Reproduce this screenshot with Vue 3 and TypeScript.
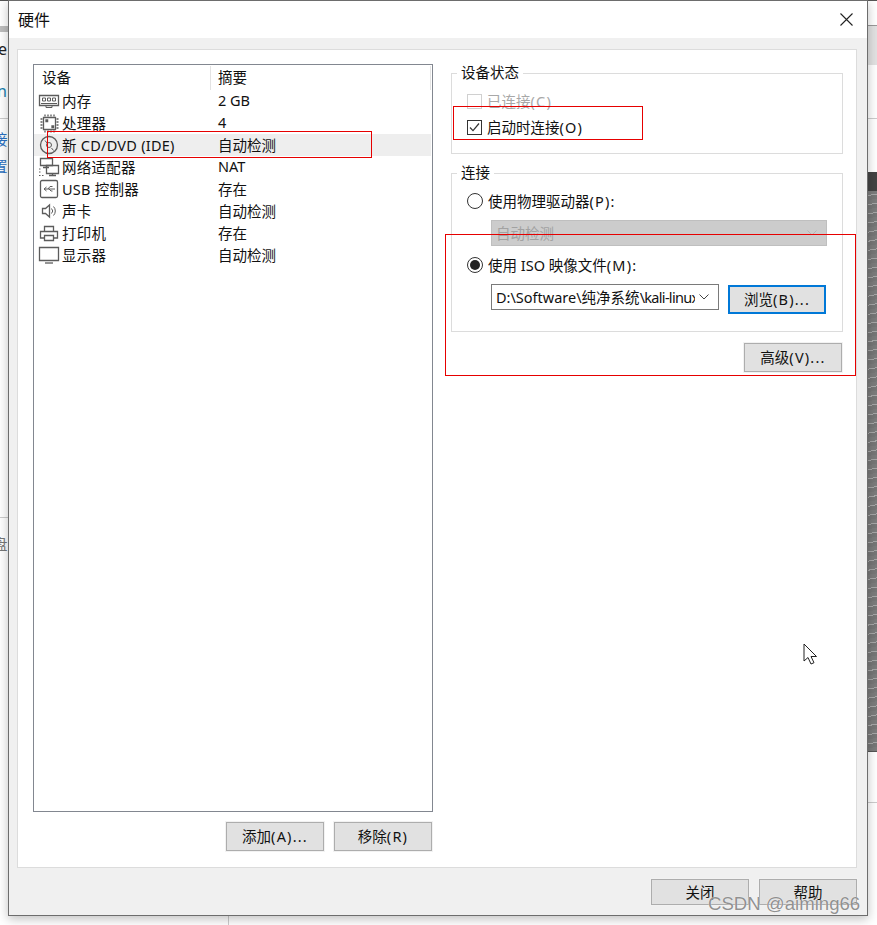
<script setup lang="ts">
import { h } from 'vue'

interface Shape { d: string; fill?: boolean; thin?: boolean }
interface Device { name: string; summary: string; selected?: boolean; icon: Shape[] }

// The reference's UI font sets "(X)" mnemonics and ellipses wider than the CJK around them.
const T = (props: { t: string }) =>
  props.t
    .split(/(\([A-Z]\)[:.]*)/)
    .filter(Boolean)
    .map((s) => (/^\([A-Z]\)/.test(s) ? h('span', { class: 'mn' }, s) : s))
T.props = ['t']

const devices: Device[] = [
  { name: '内存', summary: '2 GB', icon: [
    { d: 'M1.5 5.5h19v10h-19z' },
    { d: 'M4.500 8h3v3h-3zM9.500 8h3v3h-3zM14.500 8h3v3h-3z', thin: true },
    { d: 'M3 13.500h16M8 15.500v2h6v-2', thin: true },
  ] },
  { name: '处理器', summary: '4', icon: [
    { d: 'M5.500 5.500h12v12h-12z' },
    { d: 'M8 8h1.600v1.600H8zM14 14h1.600v1.600H14z', fill: true },
    { d: 'M7 2.500v2M10 2.500v2M13 2.500v2M16 2.500v2M7 18.500v2M10 18.500v2M13 18.500v2M16 18.500v2M2.500 7h2M2.500 10h2M2.500 13h2M2.500 16h2M18.500 7h2M18.500 10h2M18.500 13h2M18.500 16h2' },
  ] },
  { name: '新 CD/DVD (IDE)', summary: '自动检测', selected: true, icon: [
    { d: 'M11 2.500a8.500 8.500 0 1 0 0 17a8.500 8.500 0 1 0 0-17z' },
    { d: 'M11 8.500a2.500 2.500 0 1 0 0 5a2.500 2.500 0 1 0 0-5zM7 6.500L9 9M13.500 14l2 2.500', thin: true },
  ] },
  { name: '网络适配器', summary: 'NAT', icon: [
    { d: 'M2.500 2.500h12v7h-12zM8.500 9.500v2M5 11.500h6' },
    { d: 'M8.500 9.500h12v8h-12zM14.500 17.500v2M11 19.500h7' },
    { d: 'M1 19.500h1.500M4 19.500h1.500M1 16h1.500M1 13h1.500', thin: true },
  ] },
  { name: 'USB 控制器', summary: '存在', icon: [
    { d: 'M4 2.500h14a1.500 1.500 0 0 1 1.500 1.500v14a1.500 1.500 0 0 1-1.500 1.500H4a1.500 1.500 0 0 1-1.500-1.500V4A1.500 1.500 0 0 1 4 2.500z' },
    { d: 'M6 11h11M6 11l2.500-2M6 11l2.500 2M10 11l2-2.500h2.500M11 11l2 2h1.500', thin: true },
  ] },
  { name: '声卡', summary: '自动检测', icon: [
    { d: 'M4.500 8.500h3l4-3.500v12l-4-3.500h-3z' },
    { d: 'M13.500 8.500a3.500 3.500 0 0 1 0 5M15.500 6.500a6.500 6.500 0 0 1 0 9', thin: true },
  ] },
  { name: '打印机', summary: '存在', icon: [
    { d: 'M6.500 9V4.500h9V9' },
    { d: 'M6 16H2.500V9.500h17V16H16' },
    { d: 'M6.500 13.500h9v5h-9z' },
  ] },
  { name: '显示器', summary: '自动检测', icon: [
    { d: 'M1.500 3.500h19v13h-19z' },
    { d: 'M7 19h8' },
  ] },
]
</script>

<template>
  <div class="desktop">
    <div class="behind">
      <span class="strip-top"></span>
      <span class="strip-bar"></span>
      <span class="strip-e">e</span>
      <span class="strip-n">n</span>
      <span class="strip-rule r1"></span>
      <span class="strip-rule r2"></span>
      <span class="strip-a">接</span>
      <span class="strip-b">置</span>
      <span class="strip-c">盘</span>
      <span class="right-band"></span>
      <span class="right-rule r3"></span>
      <span class="right-dark"></span>
      <span class="right-noise"></span>
      <span class="right-rule r4"></span>
      <span class="bottom-rule"></span>
    </div>

    <section class="dialog">
      <header class="titlebar">
        <span class="title">硬件</span>
        <svg class="close" viewBox="0 0 13 13" width="13" height="13">
          <path d="M.5.5l12 12M12.500.5l-12 12" fill="none" stroke="#222" stroke-width="1.100" />
        </svg>
      </header>

      <div class="body">
        <main class="panel">
          <div class="left">
            <div class="list">
              <div class="list-head">
                <span class="col-a">设备</span>
                <span class="col-b">摘要</span>
              </div>
              <div
                v-for="d in devices"
                :key="d.name"
                class="row"
                :class="{ selected: d.selected }"
              >
                <svg class="icon" viewBox="0 0 22 22" width="22" height="22">
                  <path
                    v-for="(s, i) in d.icon"
                    :key="i"
                    :d="s.d"
                    :fill="s.fill ? '#555' : 'none'"
                    stroke="#5c5c5c"
                    :stroke-width="s.thin ? 1 : 1.300"
                  />
                </svg>
                <span class="name">{{ d.name }}</span>
                <span class="summary">{{ d.summary }}</span>
              </div>
            </div>
            <div class="list-actions">
              <button class="btn"><span class="lbl"><T t="添加(A)..." /></span></button>
              <button class="btn"><span class="lbl"><T t="移除(R)" /></span></button>
            </div>
          </div>

          <div class="right">
            <div class="group status">
              <span class="legend">设备状态</span>
              <label class="opt disabled">
                <span class="check"></span><span class="lbl"><T t="已连接(C)" /></span>
              </label>
              <label class="opt">
                <span class="check on">
                  <svg viewBox="0 0 15 15" width="15" height="15">
                    <path d="M3 7.500l3 3.200L12 3.500" fill="none" stroke="#333" stroke-width="1.200" />
                  </svg>
                </span><span class="lbl"><T t="启动时连接(O)" /></span>
              </label>
            </div>

            <div class="group conn">
              <span class="legend">连接</span>
              <label class="opt"><span class="radio"></span><span class="lbl"><T t="使用物理驱动器(P):" /></span></label>
              <div class="select off">
                <span class="lbl">自动检测</span>
                <svg viewBox="0 0 10 6" width="10" height="6"><path d="M.5.5L5 5 9.500.5" fill="none" stroke="#b5b5b5" /></svg>
              </div>
              <label class="opt"><span class="radio on"></span><span class="lbl"><T t="使用 ISO 映像文件(M):" /></span></label>
              <div class="iso">
                <div class="select path">
                  <span class="path-text lbl">D:\Software\纯净系统<span class="tight">\kali-linux-2022.1-installer-amd64.iso</span></span>
                  <svg viewBox="0 0 10 6" width="10" height="6"><path d="M.5.5L5 5 9.500.5" fill="none" stroke="#444" /></svg>
                </div>
                <button class="btn focus"><span class="lbl"><T t="浏览(B)..." /></span></button>
              </div>
            </div>

            <div class="adv">
              <button class="btn"><span class="lbl"><T t="高级(V)..." /></span></button>
            </div>
          </div>
        </main>

        <footer class="footer">
          <button class="btn low"><span class="lbl">关闭</span></button>
          <button class="btn low"><span class="lbl">帮助</span></button>
        </footer>
      </div>
    </section>

    <span class="mark m1"></span>
    <span class="mark m2"></span>
    <span class="mark m3"></span>

    <svg class="cursor" viewBox="0 0 17 23" width="17" height="23">
      <path d="M1 1v17l4-3.500 3 6.500 3-1.300-3-6.200h5.500z" fill="#fff" stroke="#222" stroke-width="1" />
    </svg>

    <span class="watermark">CSDN @aiming66</span>
  </div>
</template>

<style>
html, body { margin: 0; background: #fff; }
</style>

<style scoped>
.desktop {
  position: relative;
  width: 877px;
  height: 925px;
  overflow: hidden;
  background: #fff;
  font-family: "Noto Sans", "Noto Sans CJK SC", sans-serif;
  font-size: 14.5px;
  color: #111;
}
.desktop :deep(.mn) { letter-spacing: 1.2px; }

/* fragments of the windows behind the dialog */
.behind span { position: absolute; }
.strip-top { left: 0; top: 0; width: 877px; height: 1px; background: #555; }
.strip-bar { left: 0; top: 26px; width: 8px; height: 6px; background: #bdbdbd; }
.strip-e { left: -2px; top: 38px; font-size: 16px; color: #222; }
.strip-n { left: -3px; top: 80px; font-size: 16px; color: #1a7fb0; }
.strip-rule { left: 0; width: 8px; height: 1px; background: #ccc; }
.r1 { top: 118px; }
.r2 { top: 517px; }
.strip-a { left: -7px; top: 128px; color: #2a6fc0; }
.strip-b { left: -7px; top: 155px; color: #2a6fc0; }
.strip-c { left: -7px; top: 533px; color: #777; }
.right-band { left: 868px; top: 25px; width: 9px; height: 40px; background: #e2e2e2; border-top: 1px solid #999; box-sizing: border-box; }
.right-rule { left: 868px; width: 9px; height: 1px; background: #ccc; }
.r3 { top: 118px; }
.r4 { top: 802px; }
.right-dark { left: 868px; top: 172px; width: 9px; height: 19px; background: #444; }
.right-noise {
  left: 868px; top: 191px; width: 9px; height: 560px;
  background: repeating-linear-gradient(170deg, #7c7c7c 0 4px, #a8a8a8 4px 5px, #777 5px 9px);
  border-bottom: 1px solid #555;
}
.bottom-rule { left: 228px; top: 916px; width: 1px; height: 9px; background: #ccc; }

.dialog {
  position: absolute;
  left: 8px;
  top: 0;
  width: 860px;
  height: 916px;
  box-sizing: border-box;
  border: 1px solid #6d6d6d;
  box-shadow: 0 3px 10px rgba(0, 0, 0, .25);
  background: #f0f0f0;
  display: flex;
  flex-direction: column;
}

.titlebar {
  height: 37px;
  flex: none;
  background: #fff;
  display: flex;
  align-items: center;
  justify-content: space-between;
  padding: 0 14px 0 9px;
}
.title { font-size: 16px; color: #111; padding-bottom: 2px; }
.close { flex: none; }

.body {
  flex: 1;
  display: flex;
  flex-direction: column;
  padding: 11px 10px 0 8px;
}

.panel {
  height: 819px;
  box-sizing: border-box;
  background: #fff;
  border: 1px solid #dcdcdc;
  padding: 14px 13px 0 15px;
  display: flex;
  gap: 18px;
}

.left { width: 400px; flex: none; display: flex; flex-direction: column; }
.list {
  height: 748px;
  box-sizing: border-box;
  border: 1px solid #828790;
  padding-top: 1px;
}
.list-head { display: flex; height: 24px; line-height: 23px; }
.col-a { width: 177px; box-sizing: border-box; padding-left: 8px; border-right: 1px solid #e3e3e3; }
.col-b { flex: 1; padding-left: 7px; border-right: 1px solid #e3e3e3; margin-right: 1px; }

.row {
  display: flex;
  align-items: center;
  height: 22px;
  margin-right: 1px;
  padding-left: 4px;
}
.row.selected { background: #eeeeee; }
.icon { flex: none; }
.name { width: 158px; flex: none; padding: 0 0 2px 2px; box-sizing: border-box; white-space: pre; letter-spacing: .25px; }
.summary { flex: 1; padding-bottom: 2px; }

.list-actions {
  display: flex;
  justify-content: flex-end;
  gap: 10px;
  margin-top: 10px;
  padding-right: 1px;
}

.btn {
  width: 98px;
  height: 29px;
  box-sizing: border-box;
  border: 1px solid #adadad;
  background: #e1e1e1;
  box-shadow: 0 0 0 1px #f2f2f2;
  font: inherit;
  color: #111;
  padding: 0 0 2px;
}
.btn.low { height: 26px; }
.btn.focus { border: 2px solid #0078d7; box-shadow: none; margin-top: 1px; flex: none; }

.right { width: 392px; flex: none; padding-top: 9px; }

.group {
  position: relative;
  box-sizing: border-box;
  border: 1px solid #dcdcdc;
  padding: 14px 15px 0;
}
.status { height: 81px; }
.conn { height: 159px; margin-top: 19px; display: flex; flex-direction: column; gap: 6px; }
.legend {
  position: absolute;
  left: 5px;
  top: -12px;
  padding: 0 4px;
  background: #fff;
  line-height: 20px;
}

.opt { display: flex; align-items: center; height: 26px; }
.opt .lbl { padding-bottom: 2px; }
.opt.disabled { color: #a8a8a8; }

.check {
  width: 15px;
  height: 15px;
  box-sizing: border-box;
  border: 1px solid #d0d0d0;
  margin-right: 5px;
  flex: none;
  display: flex;
  align-items: center;
  justify-content: center;
}
.check.on { border-color: #333; }
.check svg { flex: none; }

.radio {
  width: 16px;
  height: 16px;
  box-sizing: border-box;
  border: 1px solid #333;
  border-radius: 50%;
  margin-right: 5px;
  flex: none;
  display: flex;
  align-items: center;
  justify-content: center;
}
.radio.on::before {
  content: "";
  width: 10px;
  height: 10px;
  border-radius: 50%;
  background: #222;
}

.select {
  height: 26px;
  box-sizing: border-box;
  display: flex;
  align-items: center;
  justify-content: space-between;
  padding: 0 9px 0 4px;
}
.select .lbl { padding-bottom: 2px; }
.select.off {
  margin-left: 24px;
  width: 336px;
  background: #cccccc;
  border: 1px solid #bfbfbf;
  color: #a2a2a2;
}
.iso { display: flex; align-items: flex-start; gap: 9px; margin-left: 24px; }
.select.path {
  width: 228px;
  flex: none;
  border: 1px solid #7a7a7a;
}
.path-text {
  width: 199px;
  overflow: hidden;
  white-space: nowrap;
}
.tight { letter-spacing: -.7px; }

.adv { display: flex; justify-content: flex-end; padding-right: 1px; margin-top: 11px; }

.footer {
  display: flex;
  justify-content: flex-end;
  gap: 10px;
  margin-top: 11px;
}

.mark { position: absolute; box-sizing: border-box; border: 1px solid #e60000; pointer-events: none; }
.m1 { left: 47px; top: 131px; width: 325px; height: 27px; }
.m2 { left: 453px; top: 106px; width: 190px; height: 34px; }
.m3 { left: 445px; top: 234px; width: 411px; height: 142px; }

.cursor { position: absolute; left: 803px; top: 643px; }

.watermark {
  position: absolute;
  left: 708px;
  top: 894px;
  font-family: "Liberation Sans", sans-serif;
  font-size: 18.600px;
  line-height: 20px;
  color: rgba(125, 125, 125, .85);
  text-shadow: 0 0 1px #fff;
}
</style>
